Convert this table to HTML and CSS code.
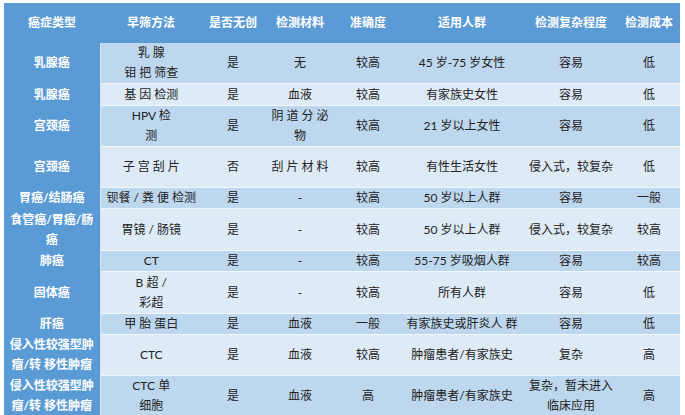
FILE: index.html
```html
<!DOCTYPE html>
<html lang="zh">
<head>
<meta charset="utf-8">
<title>癌症早筛方法</title>
<link rel="stylesheet" href="styles.css">
</head>
<body>
<table class="grid">
  <colgroup>
    <col class="c1"><col class="c2"><col class="c3"><col class="c4">
    <col class="c5"><col class="c6"><col class="c7"><col class="c8">
  </colgroup>
  <thead>
    <tr class="h40">
      <th>癌症类型</th><th>早筛方法</th><th>是否无创</th><th>检测材料</th>
      <th>准确度</th><th>适用人群</th><th>检测复杂程度</th><th>检测成本</th>
    </tr>
  </thead>
  <tbody>
    <tr class="mid h40">
      <th>乳腺癌</th><td>乳 腺<br>钼 把 筛查</td><td>是</td><td>无</td>
      <td>较高</td><td>45 岁-75 岁女性</td><td>容易</td><td>低</td>
    </tr>
    <tr class="light h22">
      <th>乳腺癌</th><td>基 因 检测</td><td>是</td><td>血液</td>
      <td>较高</td><td>有家族史女性</td><td>容易</td><td>低</td>
    </tr>
    <tr class="mid h40">
      <th>宫颈癌</th><td>HPV 检<br>测</td><td>是</td><td>阴 道 分 泌<br>物</td>
      <td>较高</td><td>21 岁以上女性</td><td>容易</td><td>低</td>
    </tr>
    <tr class="light h41">
      <th>宫颈癌</th><td>子 宫 刮 片</td><td>否</td><td>刮 片 材 料</td>
      <td>较高</td><td>有性生活女性</td><td>侵入式，较复杂</td><td>低</td>
    </tr>
    <tr class="mid h20">
      <th>胃癌/结肠癌</th><td>钡餐 / 粪 便 检测</td><td>是</td><td>-</td>
      <td>较高</td><td>50 岁以上人群</td><td>容易</td><td>一般</td>
    </tr>
    <tr class="light h42">
      <th>食管癌/胃癌/肠<br>癌</th><td>胃镜 / 肠镜</td><td>是</td><td>-</td>
      <td>较高</td><td>50 岁以上人群</td><td>侵入式，较复杂</td><td>较高</td>
    </tr>
    <tr class="mid h19">
      <th>肺癌</th><td>CT</td><td>是</td><td>-</td>
      <td>较高</td><td>55-75 岁吸烟人群</td><td>容易</td><td>较高</td>
    </tr>
    <tr class="light h42">
      <th>固体癌</th><td>B 超 /<br>彩超</td><td>是</td><td>-</td>
      <td>较高</td><td>所有人群</td><td>容易</td><td>低</td>
    </tr>
    <tr class="mid h20">
      <th>肝癌</th><td>甲 胎 蛋白</td><td>是</td><td>血液</td>
      <td>一般</td><td>有家族史或肝炎人 群</td><td>容易</td><td>低</td>
    </tr>
    <tr class="light h41">
      <th>侵入性较强型肿<br>瘤/转 移性肿瘤</th><td>CTC</td><td>是</td><td>血液</td>
      <td>较高</td><td>肿瘤患者/有家族史</td><td>复杂</td><td>高</td>
    </tr>
    <tr class="mid h41">
      <th>侵入性较强型肿<br>瘤/转 移性肿瘤</th><td>CTC 单<br>细胞</td><td>是</td><td>血液</td>
      <td>高</td><td>肿瘤患者/有家族史</td><td>复杂，暂未进入<br>临床应用</td><td>高</td>
    </tr>
  </tbody>
</table>
</body>
</html>
```

FILE: styles.css
```css
html, body {
  margin: 0;
  padding: 0;
  background: #ffffff;
}

body {
  padding: 3px 5px 0 4px;
  font-family: "Lato", "Noto Sans CJK SC", sans-serif;
  font-size: 12px;
  color: #222222;
}

.grid {
  border-collapse: collapse;
  table-layout: fixed;
  width: 676px;
}

.c1 { width: 96px; }
.c2 { width: 102px; }
.c3 { width: 62px; }
.c4 { width: 72px; }
.c5 { width: 64px; }
.c6 { width: 124px; }
.c7 { width: 94px; }
.c8 { width: 62px; }

.grid th,
.grid td {
  padding: 0 1px;
  text-align: center;
  vertical-align: middle;
  line-height: 20px;
  white-space: nowrap;
}

.grid thead th {
  background: #5b9bd5;
  color: #ffffff;
  font-weight: bold;
}

.grid tbody th {
  background: #5b9bd5;
  color: #ffffff;
  font-weight: bold;
  border-right: 1px solid #d6e6f5;
}

.grid tbody td {
  border-top: 1px solid #f2f7fc;
}

.grid tbody tr:first-child td {
  border-top: none;
}

.mid td { background: #bdd7ee; }
.light td { background: #deebf7; }

.h19 { height: 19px; }
.h20 { height: 20px; }
.h22 { height: 22px; }
.h40 { height: 40px; }
.h41 { height: 41px; }
.h42 { height: 42px; }
```
